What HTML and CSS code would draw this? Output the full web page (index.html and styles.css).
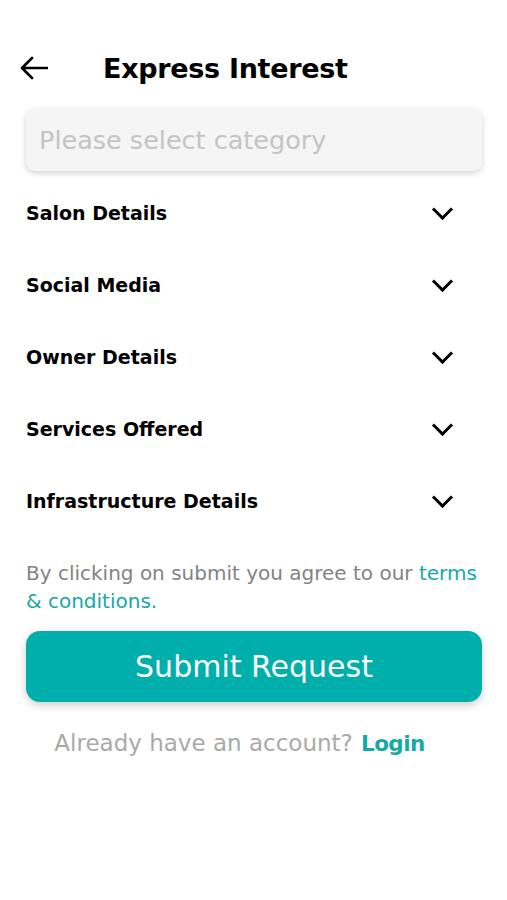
FILE: index.html
```html
<!doctype html>
<html>
<head>
<title>Express Interest</title>
<meta charset="utf-8" />
<link rel="stylesheet" href="styles.css">
</head>

<body>
<div class="page">
	<div class="header">
		<svg class="back" width="28" height="24" viewBox="0 0 28 24">
			<path d="M27 12H3M12 2L2 12l10 10" fill="none" stroke="#000" stroke-width="2.6" stroke-linecap="round" stroke-linejoin="round" />
		</svg>
		<h1>Express Interest</h1>
	</div>

	<div class="select">Please select category</div>

	<ul class="sections">
		<li><span>Salon Details</span><i class="chev"></i></li>
		<li><span>Social Media</span><i class="chev"></i></li>
		<li><span>Owner Details</span><i class="chev"></i></li>
		<li><span>Services Offered</span><i class="chev"></i></li>
		<li><span>Infrastructure Details</span><i class="chev"></i></li>
	</ul>

	<p class="terms">By clicking on submit you agree to our <a href="#">terms <span class="nowrap">&amp; conditions.</span></a></p>

	<button class="submit">Submit Request</button>

	<p class="login">Already have an account? <a href="#">Login</a></p>
</div>
</body>
</html>
```

FILE: styles.css
```css
body { margin: 0; background: #fff; font-family: 'DejaVu Sans', sans-serif; color: #000; }
.page { padding: 0 25px 0 26px; }

.header { display: flex; align-items: center; height: 60px; margin-top: 38px; margin-left: -6px; }
.back { display: block; flex: none; }
.header h1 { margin: 0 0 0 55px; font-size: 27px; font-weight: 700; letter-spacing: -0.3px; }

.select { height: 62px; margin-top: 11px; padding-left: 13px; display: flex; align-items: center; background: #f5f5f5; border-radius: 9px; box-shadow: 0 2px 6px rgba(0,0,0,0.18); font-size: 25.5px; color: #c4c4c4; }

.sections { list-style: none; margin: 6px 0 0; padding: 0; }
.sections li { display: flex; align-items: center; justify-content: space-between; height: 72px; font-size: 19px; font-weight: 700; }
.chev { width: 12px; height: 12px; margin: -8px 32px 0 0; border-right: 3px solid #000; border-bottom: 3px solid #000; transform: rotate(45deg); }

.terms { margin: 22px 0 0; font-size: 20px; line-height: 28px; color: #838383; }
.terms a, .login a { color: #17a9a8; text-decoration: none; }
.nowrap { white-space: nowrap; }

.submit { display: block; width: 100%; height: 71px; margin-top: 16px; border: 0; border-radius: 14px; background: #00aeac; color: #fff; font: 30px 'DejaVu Sans', sans-serif; box-shadow: 0 3px 8px rgba(0,0,0,0.2); }

.login { margin: 28px 0 0; padding-right: 29px; text-align: center; font-size: 23px; color: #a9a9a9; }
.login a { font-size: 21.5px; font-weight: 700; letter-spacing: -0.6px; margin-left: 1px; }
```
